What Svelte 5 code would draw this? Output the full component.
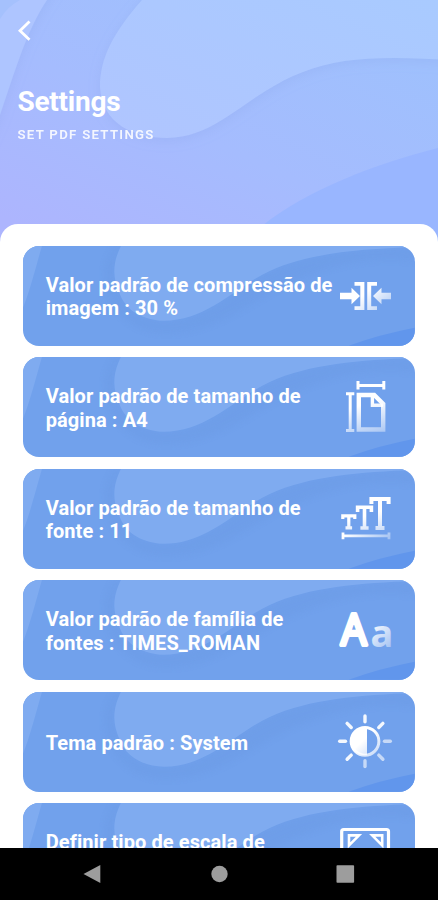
<script>
	const settings = [
		{ icon: 'compress', label: 'Valor padrão de compressão de imagem : 30 %' },
		{ icon: 'page', label: 'Valor padrão de tamanho de página : A4' },
		{ icon: 'size', label: 'Valor padrão de tamanho de fonte : 11' },
		{ icon: 'family', label: 'Valor padrão de família de fontes : TIMES_ROMAN' },
		{ icon: 'theme', label: 'Tema padrão : System' },
		{ icon: 'scale', label: 'Definir tipo de escala de imagem' }
	]

	const rays = [0, 45, 90, 135, 180, 225, 270, 315]
</script>

<!-- Shared fade for the icons -->
<svg class="defs" width="0" height="0" aria-hidden="true">
	<defs>
		<linearGradient id="fade" gradientUnits="userSpaceOnUse" x1="-16" y1="-20" x2="24" y2="24">
			<stop offset="0.4" stop-color="#fff" />
			<stop offset="1" stop-color="#fff" stop-opacity="0.3" />
		</linearGradient>
		<linearGradient id="fade-down" gradientUnits="userSpaceOnUse" x1="-4" y1="-20" x2="10" y2="28">
			<stop offset="0.35" stop-color="#fff" />
			<stop offset="1" stop-color="#fff" stop-opacity="0.4" />
		</linearGradient>
	</defs>
</svg>

<div class="screen">
	<header>
		<svg class="waves" viewBox="0 0 438 244" aria-hidden="true">
			<defs>
				<linearGradient id="sky" gradientUnits="userSpaceOnUse" x1="190" y1="-40" x2="60" y2="244">
					<stop offset="0" stop-color="#9fc0fd" />
					<stop offset="0.5" stop-color="#a5bcfe" />
					<stop offset="1" stop-color="#adb5fe" />
				</linearGradient>
				<linearGradient id="blob" x1="1" y1="0" x2="0" y2="1">
					<stop offset="0" stop-color="#a8cbff" />
					<stop offset="1" stop-color="#b0c5ff" />
				</linearGradient>
				<filter id="soft" x="-20%" y="-20%" width="140%" height="150%">
					<feDropShadow dx="0" dy="3" stdDeviation="6" flood-color="#829fe6" flood-opacity="0.24" />
				</filter>
			</defs>
			<rect width="438" height="244" fill="url(#sky)" />
			<path d="M-20-20H60L47 0C26 31 14 75 0 115L-20 160Z" fill="#aec5ff" filter="url(#soft)" />
			<path d="M0 0H20Q7 7 0 19Z" fill="#a5c1fd" />
			<path d="M158-20L142 0C113 33 100 58 100 87C102 124 134 138 167 138C218 138 247 93 303 72C343 56 392 56 460 61V-20Z" fill="url(#blob)" filter="url(#soft)" />
			<path d="M262 226C306 190 378 163 438 148V244H240Z" fill="#99b6ff" />
		</svg>
		<div class="heading">
			<svg class="back" viewBox="0 0 14 22" aria-label="Back">
				<path d="M11.5 1.5 2 10.8l9.5 9" />
			</svg>
			<h1>Settings</h1>
			<p>SET PDF SETTINGS</p>
		</div>
	</header>

	<main>
		{#each settings as { icon, label }}
			<div class="card">
				<svg class="card-waves" viewBox="0 0 392 100" preserveAspectRatio="none" aria-hidden="true">
					<path class="shade" d="M98 0C88 20 91 34 96 46C103 66 121 74 141 75C185 75 214 40 247 25C286 7 338 3 392 1V15C330 7 280 30 248 46C205 72 180 87 140 87C108 85 92 66 85 46C78 20 87 10 92 0Z" />
					<path class="light" d="M0 0H19C14 17 7 45 0 62Z" />
					<path class="light" d="M98 0C88 20 91 34 96 46C103 66 121 74 141 75C185 75 214 40 247 25C286 7 338 3 392 1V0Z" />
					<path class="deep" d="M326 100Q356 89 392 82V100Z" />
				</svg>
				<div class="row">
					<span>{label}</span>
					<svg class="icon" viewBox="-30 -30 60 60" aria-hidden="true">
						{#if icon === 'compress'}
							<g fill="url(#fade)">
								<path d="M-25-3.3h11.5v-4.9L-5 0l-8.5 8.2V3.3H-25Z" />
								<path d="M26-3.3H16.5v-4.9L8 0l8.5 8.2V3.3H26Z" />
								<path d="M-10.5-14H-.6v28h-9.9v-3.8h5.8v-20.4h-5.8Z" />
								<path d="M12-14H2.2v28H12v-3.8H6.2v-20.4H12Z" />
							</g>
						{:else if icon === 'page'}
							<g fill="none" stroke="url(#fade-down)" stroke-width="3">
								<path d="M-8.3-21.5h28.2M-7-26v8.5M18.8-26v8.5" />
								<path d="M-14.8-13.3v37M-19-13.3h8.3M-19 23.5h8.3" />
								<path d="M-6.2-12H9.2L18.2-3v25.5H-6.2Z" stroke-width="4.4" />
								<path d="M7.4-11.5v9.8h10.6" stroke-width="3.4" />
							</g>
						{:else if icon === 'size'}
							<g fill="none" stroke="url(#fade-down)">
								<path d="M-22.2 0v-3.2h12V0M-16.2-3.2V8.8M-19.5 8.8h6.6" stroke-width="3.2" />
								<path d="M-7.4-7v-4.7H6.4V-7M-.5-11.7V9M-4.6 9h8.2" stroke-width="3.6" />
								<path d="M6.4-15v-5H23.6v5M15-20V9M10.5 9h9" stroke-width="4" />
							</g>
							<path d="M-22 13.6v6.6M-22 16.9h46M24 13.6v6.6" fill="none" stroke="url(#fade)" stroke-width="2.8" />
						{:else if icon === 'family'}
							<text class="upper" x="-24" y="15.4" font-size="43" textLength="25.5" lengthAdjust="spacingAndGlyphs">A</text>
							<text x="5.6" y="17.2" font-size="38" fill="url(#fade)">a</text>
						{:else if icon === 'theme'}
							<g transform="translate(0 -.7)">
								{#each rays as angle}
									<path d="M-1.7-25.3a1.7 1.7 0 0 1 3.4 0v5.8a1.7 1.7 0 0 1-3.4 0Z" transform="rotate({angle})" fill="#fff" opacity={angle >= 90 && angle <= 180 ? 0.6 : 0.92} />
								{/each}
								<circle r="13.9" fill="none" stroke="url(#fade)" stroke-width="3" />
								<path d="M2-14V14H0A14 14 0 0 1 0-14Z" fill="url(#fade)" />
							</g>
						{:else}
							<g fill="none" stroke="#fff">
								<rect x="-23.3" y="-23.5" width="46.8" height="47" rx="2" stroke-width="3.2" />
								<path d="M-16-17.6h10l-10 10ZM17.2-17.6h-10l10 10Z" stroke-width="2.6" />
							</g>
						{/if}
					</svg>
				</div>
			</div>
		{/each}
	</main>

	<nav>
		<svg viewBox="0 0 438 52" aria-hidden="true">
			<path d="M83.5 26 100.3 17v18Z" />
			<circle cx="219.5" cy="26" r="8.2" />
			<rect x="336.5" y="17.2" width="17.6" height="17.6" rx="0.8" />
		</svg>
	</nav>
</div>

<style>
	:global(body) {
		margin: 0;
	}

	.defs {
		position: absolute;
	}

	.screen {
		display: grid;
		grid-template-rows: 223.5px 624.5px 52px;
		width: 438px;
		height: 900px;
		overflow: hidden;
		background: #a4b0ff;
		font-family: Roboto, sans-serif;
		color: #fff;
	}

	header {
		display: grid;
		height: 244px;
	}

	.waves,
	.heading {
		grid-area: 1 / 1;
	}

	.waves {
		width: 438px;
		height: 244px;
	}

	.heading {
		z-index: 1;
		padding: 20px 18px 0 17.5px;
	}

	.back {
		display: block;
		width: 14px;
		height: 22px;
		fill: none;
		stroke: #fff;
		stroke-width: 2.8;
	}

	h1 {
		margin: 43px 0 0;
		font-size: 28px;
		line-height: 34px;
		font-weight: 700;
		letter-spacing: -0.25px;
	}

	p {
		margin: 7.5px 0 0;
		font-size: 13.2px;
		line-height: 16px;
		font-weight: 600;
		letter-spacing: 1.3px;
		opacity: 0.88;
	}

	main {
		z-index: 1;
		display: flex;
		flex-direction: column;
		gap: 11.7px;
		padding: 22.5px 23px 0 23.3px;
		overflow: hidden;
		border-radius: 18px 18px 0 0;
		background: #fff;
	}

	.card {
		display: grid;
		flex: none;
		height: 99.8px;
		overflow: hidden;
		border-radius: 16px;
		background: #71a1ec;
	}

	.card-waves,
	.row {
		grid-area: 1 / 1;
		width: 100%;
		height: 99.8px;
	}

	.light {
		fill: #7fabf0;
	}

	.shade {
		fill: #6896e0;
		opacity: 0.25;
		filter: blur(3px);
	}

	.deep {
		fill: #6196ec;
	}

	.row {
		z-index: 1;
		display: flex;
		align-items: center;
		justify-content: space-between;
		box-sizing: border-box;
		padding: 3px 20px 0 22.4px;
	}

	.row span {
		width: 289px;
		font-size: 20px;
		line-height: 23.5px;
		font-weight: 700;
		letter-spacing: 0.09px;
	}

	.icon {
		flex: none;
		width: 60px;
		height: 60px;
		margin-top: -3px;
		overflow: visible;
	}

	.icon text {
		font-family: 'Noto Sans', sans-serif;
		font-weight: 700;
	}

	.icon .upper {
		font-family: 'Open Sans', sans-serif;
		font-weight: 400;
		fill: #fff;
		stroke: #fff;
		stroke-width: 4;
		stroke-linejoin: round;
	}

	nav {
		z-index: 1;
		background: #000;
	}

	nav svg {
		display: block;
		fill: #9d9d9d;
	}
</style>
